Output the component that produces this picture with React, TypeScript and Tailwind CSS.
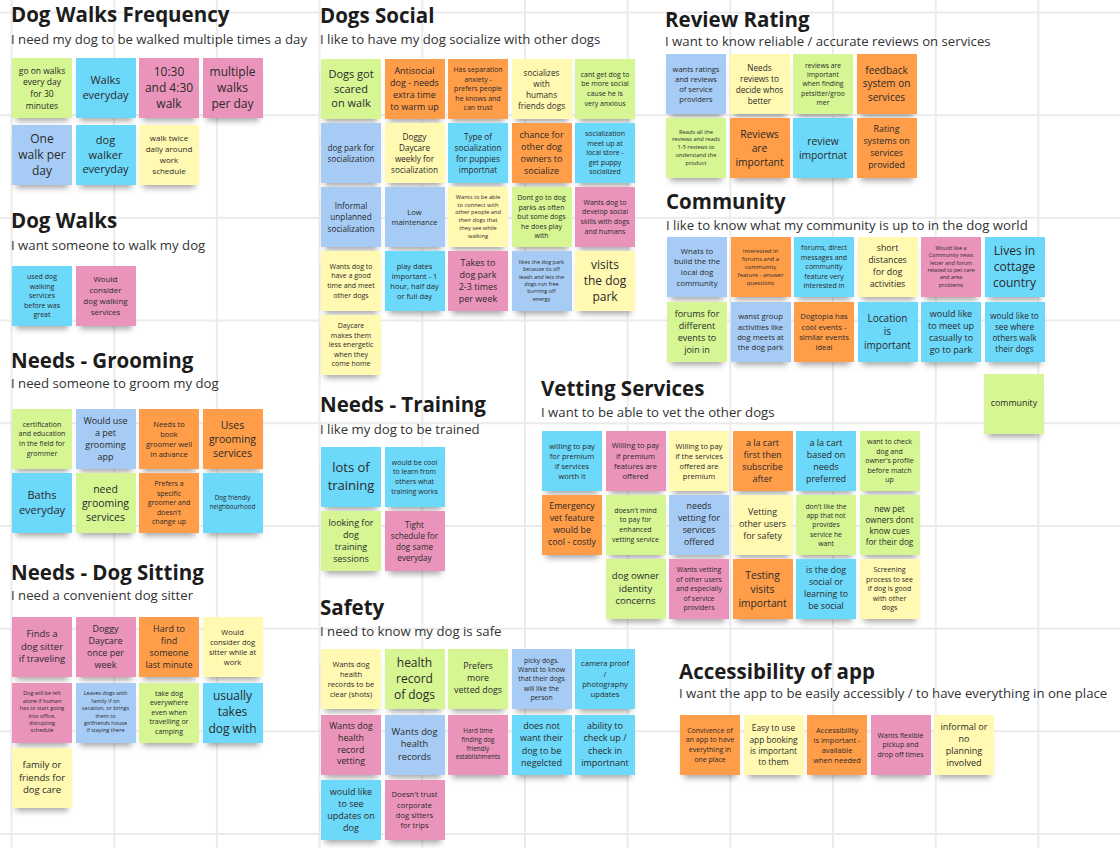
import React from "react";

type Note = [string, string, string] | null;

const COLORS: Record<string, string> = {
  Y: "bg-[#fff9b1]",
  G: "bg-[#d5f692]",
  B: "bg-[#6cd8fa]",
  L: "bg-[#a6ccf5]",
  P: "bg-[#ea94bb]",
  O: "bg-[#ff9d48]",
};

function Sticky({ note, extra = "" }: { note: Note; extra?: string }) {
  if (!note) return <div className="h-[60px] w-[60px]" />;
  const [c, size, text] = note;
  return (
    <div
      className={`flex h-[60px] w-[60px] items-center justify-center whitespace-pre text-center leading-[1.36] text-[#2a2a2a] shadow-[0_7px_6px_-4px_rgba(0,0,0,0.35)] ${COLORS[c]} ${size} ${extra}`}
    >
      {text}
    </div>
  );
}

type ClusterProps = {
  pos: string;
  title: string;
  sub: string;
  subMt: string;
  stickMt: string;
  cols: string;
  gapY?: string;
  titleLeading?: string;
  notes: Note[];
};

function Cluster({
  pos,
  title,
  sub,
  subMt,
  stickMt,
  cols,
  gapY = "gap-y-[5px]",
  titleLeading = "leading-[26px]",
  notes,
}: ClusterProps) {
  return (
    <div className={`absolute ${pos}`}>
      <div className={`whitespace-nowrap text-[20.5px] font-bold text-[#1c1c1c] ${titleLeading}`}>{title}</div>
      <div className={`whitespace-nowrap text-[13.2px] leading-[20px] text-[#333333] ${subMt}`}>{sub}</div>
      <div className={`ml-[1px] grid gap-x-[3.5px] ${gapY} ${cols} ${stickMt}`}>
        {notes.map((n, i) => (
          <Sticky key={i} note={n} />
        ))}
      </div>
    </div>
  );
}

export default function App() {
  return (
    <div className="relative h-[848px] w-[1120px] overflow-hidden bg-white bg-[linear-gradient(to_right,#ebebeb_1.5px,transparent_1.5px),linear-gradient(to_bottom,#ebebeb_1.5px,transparent_1.5px)] bg-[size:102.7px_102.7px] bg-[position:10.5px_11.5px] font-['Open_Sans',sans-serif]">
      <Cluster
        pos="left-[11px] top-[1px]"
        title="Dog Walks Frequency"
        sub="I need my dog to be walked multiple times a day"
        subMt="mt-[2px]"
        stickMt="mt-[9px]"
        cols="grid-cols-[repeat(4,60px)]"
        gapY="gap-y-[7px]"
        notes={[
          ["G", "text-[8.5px]", "go on walks\nevery day\nfor 30\nminutes"],
          ["B", "text-[11px]", "Walks\neveryday"],
          ["P", "text-[12px]", "10:30\nand 4:30\nwalk"],
          ["P", "text-[12px]", "multiple\nwalks\nper day"],
          ["L", "text-[12px]", "One\nwalk per\nday"],
          ["B", "text-[11px]", "dog\nwalker\neveryday"],
          ["Y", "text-[8px]", "walk twice\ndaily around\nwork\nschedule"],
        ]}
      />
      <Cluster
        pos="left-[11px] top-[207px]"
        title="Dog Walks"
        sub="I want someone to walk my dog"
        subMt="mt-[2px]"
        stickMt="mt-[11px]"
        cols="grid-cols-[repeat(4,60px)]"
        notes={[
          ["B", "text-[7px]", "used dog\nwalking\nservices\nbefore was\ngreat"],
          ["P", "text-[8px]", "Would\nconsider\ndog walking\nservices"],
        ]}
      />
      <Cluster
        pos="left-[11px] top-[347px]"
        title="Needs - Grooming"
        sub="I need someone to groom my dog"
        subMt="mt-0"
        stickMt="mt-[16px]"
        cols="grid-cols-[repeat(4,60px)]"
        gapY="gap-y-[4px]"
        notes={[
          ["G", "text-[7px]", "certification\nand education\nin the field for\ngrommer"],
          ["L", "text-[9px]", "Would use\na pet\ngrooming\napp"],
          ["O", "text-[7.5px]", "Needs to\nbook\ngroomer well\nin advance"],
          ["O", "text-[10.5px]", "Uses\ngrooming\nservices"],
          ["B", "text-[11px]", "Baths\neveryday"],
          ["G", "text-[10.5px]", "need\ngrooming\nservices"],
          ["O", "text-[7px]", "Prefers a\nspecific\ngroomer and\ndoesn't\nchange up"],
          ["B", "text-[6.3px]", "Dog friendly\nneighbourhood"],
        ]}
      />
      <Cluster
        pos="left-[11px] top-[559px]"
        title="Needs - Dog Sitting"
        sub="I need a convenient dog sitter"
        subMt="mt-0"
        stickMt="mt-[12px]"
        cols="grid-cols-[repeat(4,60px)]"
        gapY="gap-y-[5.5px]"
        notes={[
          ["P", "text-[9.5px]", "Finds a\ndog sitter\nif traveling"],
          ["P", "text-[9px]", "Doggy\nDaycare\nonce per\nweek"],
          ["O", "text-[9px]", "Hard to\nfind\nsomeone\nlast minute"],
          ["Y", "text-[7.5px]", "Would\nconsider dog\nsitter while at\nwork"],
          ["P", "text-[5.5px]", "Dog will be left\nalone if human\nhas to start going\ninto office,\ndisrupting\nschedule"],
          ["L", "text-[5.5px]", "Leaves dogs with\nfamily if on\nvacation, or brings\nthem to\ngirlfriends house\nif staying there"],
          ["G", "text-[7px]", "take dog\neverywhere\neven when\ntravelling or\ncamping"],
          ["B", "text-[12px]", "usually\ntakes\ndog with"],
          ["Y", "text-[9.5px]", "family or\nfriends for\ndog care"],
        ]}
      />
      <Cluster
        pos="left-[320px] top-[2px]"
        title="Dogs Social"
        sub="I like to have my dog socialize with other dogs"
        subMt="mt-[1px]"
        stickMt="mt-[10px]"
        cols="grid-cols-[repeat(5,60px)]"
        gapY="gap-y-[4px]"
        notes={[
          ["G", "text-[11px]", "Dogs got\nscared\non walk"],
          ["O", "text-[9px]", "Antisocial\ndog - needs\nextra time\nto warm up"],
          ["O", "text-[7px]", "Has separation\nanxiety -\nprefers people\nhe knows and\ncan trust"],
          ["Y", "text-[8.2px]", "socializes\nwith\nhumans\nfriends dogs"],
          ["G", "text-[7px]", "cant get dog to\nbe more social\ncause he is\nvery anxious"],
          ["L", "text-[8.2px]", "dog park for\nsocialization"],
          ["Y", "text-[8.2px]", "Doggy\nDaycare\nweekly for\nsocialization"],
          ["B", "text-[8.2px]", "Type of\nsocialization\nfor puppies\nimportnat"],
          ["O", "text-[9px]", "chance for\nother dog\nowners to\nsocialize"],
          ["B", "text-[7px]", "socialization\nmeet up at\nlocal store -\nget puppy\nsocialized"],
          ["L", "text-[8.2px]", "Informal\nunplanned\nsocialization"],
          ["L", "text-[7.6px]", "Low\nmaintenance"],
          ["Y", "text-[5.7px]", "Wants to be able\nto connect with\nother people and\ntheir dogs that\nthey see while\nwalking"],
          ["G", "text-[7px]", "Dont go to dog\nparks as often\nbut some dogs\nhe does play\nwith"],
          ["P", "text-[7px]", "Wants dog to\ndevelop social\nskills with dogs\nand humans"],
          ["Y", "text-[7px]", "Wants dog to\nhave a good\ntime and meet\nother dogs"],
          ["B", "text-[7.5px]", "play dates\nimportant - 1\nhour, half day\nor full day"],
          ["P", "text-[9px]", "Takes to\ndog park\n2-3 times\nper week"],
          ["L", "text-[5.5px]", "likes the dog park\nbecause its off\nleash and lets the\ndogs run free\nburning off\nenergy"],
          ["Y", "text-[12px]", "visits\nthe dog\npark"],
          ["Y", "text-[7px]", "Daycare\nmakes them\nless energetic\nwhen they\ncome home"],
        ]}
      />
      <Cluster
        pos="left-[320px] top-[391px]"
        title="Needs - Training"
        sub="I like my dog to be trained"
        subMt="mt-[2px]"
        stickMt="mt-[8px]"
        cols="grid-cols-[repeat(2,60px)]"
        gapY="gap-y-[4px]"
        notes={[
          ["B", "text-[13px]", "lots of\ntraining"],
          ["B", "text-[7px]", "would be cool\nto learn from\nothers what\ntraining works"],
          ["G", "text-[9px]", "looking for\ndog\ntraining\nsessions"],
          ["P", "text-[8.2px]", "Tight\nschedule for\ndog same\neveryday"],
        ]}
      />
      <Cluster
        pos="left-[320px] top-[594px]"
        title="Safety"
        sub="I need to know my dog is safe"
        subMt="mt-[1px]"
        stickMt="mt-[8px]"
        cols="grid-cols-[repeat(5,60px)]"
        gapY="gap-y-[5.5px]"
        notes={[
          ["Y", "text-[7.5px]", "Wants dog\nhealth\nrecords to be\nclear (shots)"],
          ["G", "text-[12px]", "health\nrecord\nof dogs"],
          ["G", "text-[8.8px]", "Prefers\nmore\nvetted dogs"],
          ["L", "text-[6.8px]", "picky dogs.\nWanst to know\nthat their dogs\nwill like the\nperson"],
          ["B", "text-[7.6px]", "camera proof\n/\nphotography\nupdates"],
          ["P", "text-[8.8px]", "Wants dog\nhealth\nrecord\nvetting"],
          ["L", "text-[9.3px]", "Wants dog\nhealth\nrecords"],
          ["P", "text-[6.3px]", "Hard time\nfinding dog\nfriendly\nestablishments"],
          ["B", "text-[9px]", "does not\nwant their\ndog to be\nnegelcted"],
          ["B", "text-[9px]", "ability to\ncheck up /\ncheck in\nimportnant"],
          ["B", "text-[9px]", "would like\nto see\nupdates on\ndog"],
          ["P", "text-[7.6px]", "Doesn't trust\ncorporate\ndog sitters\nfor trips"],
        ]}
      />
      <Cluster
        pos="left-[665px] top-[8px]"
        title="Review Rating"
        sub="I want to know reliable / accurate reviews on services"
        subMt="mt-0"
        stickMt="mt-[3px]"
        cols="grid-cols-[repeat(4,60px)]"
        gapY="gap-y-[4px]"
        titleLeading="leading-[23px]"
        notes={[
          ["L", "text-[7.5px]", "wants ratings\nand reviews\nof service\nproviders"],
          ["Y", "text-[8.2px]", "Needs\nreviews to\ndecide whos\nbetter"],
          ["G", "text-[6.8px]", "reviews are\nimportant\nwhen finding\npetsitter/groo\nmer"],
          ["O", "text-[10px]", "feedback\nsystem on\nservices"],
          ["G", "text-[5.7px]", "Reads all the\nreviews and reads\n1-5 reviews to\nunderstand the\nproduct"],
          ["O", "text-[10.3px]", "Reviews\nare\nimportant"],
          ["B", "text-[10.3px]", "review\nimportnat"],
          ["O", "text-[8.8px]", "Rating\nsystems on\nservices\nprovided"],
        ]}
      />
      <Cluster
        pos="left-[666px] top-[188px]"
        title="Community"
        sub="I like to know what my community is up to in the dog world"
        subMt="mt-[1px]"
        stickMt="mt-[2px]"
        cols="grid-cols-[repeat(6,60px)]"
        notes={[
          ["L", "text-[7.8px]", "Wnats to\nbulid the the\nlocal dog\ncommunity"],
          ["O", "text-[6px]", "Interested in\nforums and a\ncommunity\nfeature - answer\nquestions"],
          ["B", "text-[7px]", "forums, direct\nmessages and\ncommunity\nfeature very\ninterested in"],
          ["Y", "text-[8.8px]", "short\ndistances\nfor dog\nactivities"],
          ["P", "text-[5.5px]", "Would like a\nCommunity news\nletter and forum\nrelated to pet care\nand area\nproblems"],
          ["B", "text-[12px]", "Lives in\ncottage\ncountry"],
          ["G", "text-[9px]", "forums for\ndifferent\nevents to\njoin in"],
          ["L", "text-[7.7px]", "wanst group\nactivities like\ndog meets at\nthe dog park"],
          ["O", "text-[7.7px]", "Dogtopia has\ncool events -\nsimilar events\nideal"],
          ["B", "text-[10px]", "Location\nis\nimportant"],
          ["B", "text-[9px]", "would like\nto meet up\ncasually to\ngo to park"],
          ["B", "text-[8.2px]", "would like to\nsee where\nothers walk\ntheir dogs"],
        ]}
      />
      <div className="absolute left-[984px] top-[374px]">
        <Sticky note={["G", "text-[8.8px]", "community"]} />
      </div>
      <Cluster
        pos="left-[541px] top-[375px]"
        title="Vetting Services"
        sub="I want to be able to vet the other dogs"
        subMt="mt-[1px]"
        stickMt="mt-[9px]"
        cols="grid-cols-[repeat(6,60px)]"
        gapY="gap-y-[4px]"
        notes={[
          ["B", "text-[7.5px]", "willing to pay\nfor premium\nif services\nworth it"],
          ["P", "text-[7.6px]", "Willing to pay\nif premium\nfeatures are\noffered"],
          ["Y", "text-[7.5px]", "Willing to pay\nif the services\noffered are\npremium"],
          ["O", "text-[9px]", "a la cart\nfirst then\nsubscribe\nafter"],
          ["B", "text-[9px]", "a la cart\nbased on\nneeds\npreferred"],
          ["G", "text-[7px]", "want to check\ndog and\nowner's profile\nbefore match\nup"],
          ["O", "text-[8.8px]", "Emergency\nvet feature\nwould be\ncool - costly"],
          ["G", "text-[7px]", "doesn't mind\nto pay for\nenhanced\nvetting service"],
          ["L", "text-[8.8px]", "needs\nvetting for\nservices\noffered"],
          ["Y", "text-[8.8px]", "Vetting\nother users\nfor safety"],
          ["G", "text-[6.8px]", "don't like the\napp that not\nprovides\nservice he\nwant"],
          ["G", "text-[8.2px]", "new pet\nowners dont\nknow cues\nfor their dog"],
          null,
          ["G", "text-[9.5px]", "dog owner\nidentity\nconcerns"],
          ["P", "text-[7px]", "Wants vetting\nof other users\nand especially\nof service\nproviders"],
          ["O", "text-[10.3px]", "Testing\nvisits\nimportant"],
          ["B", "text-[8.8px]", "is the dog\nsocial or\nlearning to\nbe social"],
          ["Y", "text-[7px]", "Screening\nprocess to see\nif dog is good\nwith other\ndogs"],
        ]}
      />
      <Cluster
        pos="left-[679px] top-[660px]"
        title="Accessibility of app"
        sub="I want the app to be easily accessibly / to have everything in one place"
        subMt="mt-0"
        stickMt="mt-[12px]"
        cols="grid-cols-[repeat(5,60px)]"
        titleLeading="leading-[23px]"
        notes={[
          ["O", "text-[7px]", "Convivence of\nan app to have\neverything in\none place"],
          ["Y", "text-[8.3px]", "Easy to use\napp booking\nis important\nto them"],
          ["O", "text-[7.5px]", "Accessibility\nis important -\navailable\nwhen needed"],
          ["P", "text-[7px]", "Wants flexible\npickup and\ndrop off times"],
          ["Y", "text-[9px]", "informal or\nno\nplanning\ninvolved"],
        ]}
      />
    </div>
  );
}
